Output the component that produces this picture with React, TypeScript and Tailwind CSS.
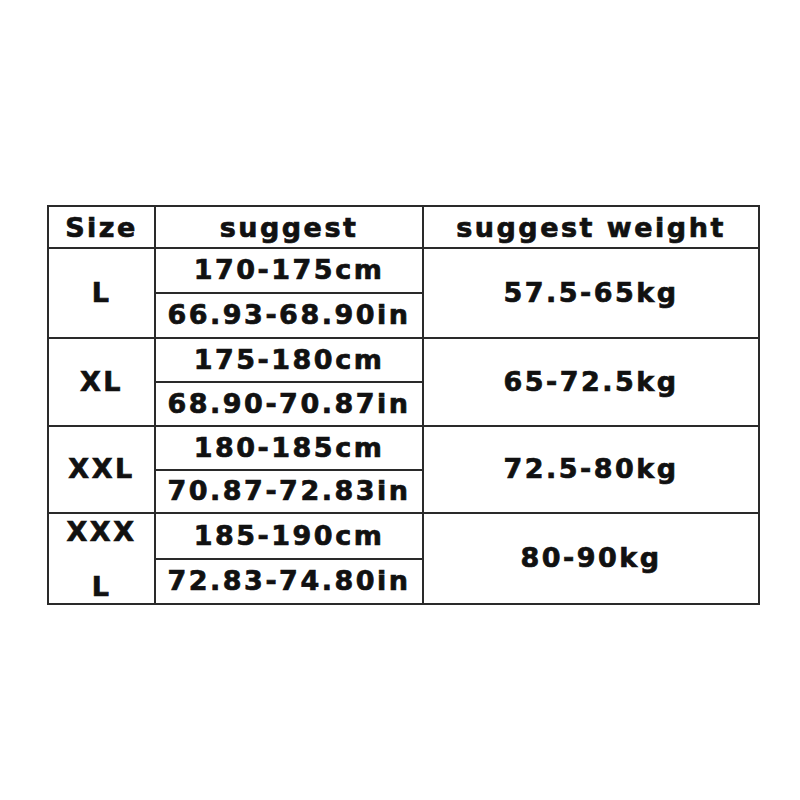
import React from "react";

const rows = [
  { size: "L", cm: "170-175cm", inch: "66.93-68.90in", kg: "57.5-65kg", h: "h-[90px]" },
  { size: "XL", cm: "175-180cm", inch: "68.90-70.87in", kg: "65-72.5kg", h: "h-[88px]" },
  { size: "XXL", cm: "180-185cm", inch: "70.87-72.83in", kg: "72.5-80kg", h: "h-[87px]" },
  { size: "XXXL", cm: "185-190cm", inch: "72.83-74.80in", kg: "80-90kg", h: "h-[89px]" },
];

export default function App() {
  return (
    <div className="w-[800px] h-[800px] bg-white flex flex-col pt-[205px] pl-[47px] text-[#111] font-['DejaVu_Sans',sans-serif] font-bold text-[27px] tracking-[2.5px] [-webkit-text-stroke:0.7px_#111]">
      <div className="w-[713px] border-2 border-[#2a2a2a] flex flex-col">
        <div className="flex h-[42px] border-b-2 border-[#2a2a2a]">
          <div className="w-[107px] border-r-2 border-[#2a2a2a] flex items-center justify-center pt-[3px]">Size</div>
          <div className="w-[268px] border-r-2 border-[#2a2a2a] flex items-center justify-center pt-[3px]">suggest</div>
          <div className="flex-1 flex items-center justify-center pt-[3px]">suggest weight</div>
        </div>
        {rows.map((r, i) => (
          <div
            key={r.size}
            className={`flex ${r.h} ${i < rows.length - 1 ? "border-b-2 border-[#2a2a2a]" : ""}`}
          >
            <div className="w-[107px] border-r-2 border-[#2a2a2a] flex items-center justify-center text-center">
              {r.size === "XXXL" ? (
                <span className="leading-[55px]">
                  XXX
                  <br />L
                </span>
              ) : (
                r.size
              )}
            </div>
            <div className="w-[268px] border-r-2 border-[#2a2a2a] flex flex-col">
              <div className="flex-1 border-b-2 border-[#2a2a2a] flex items-center justify-center">{r.cm}</div>
              <div className="flex-1 flex items-center justify-center">{r.inch}</div>
            </div>
            <div className="flex-1 flex items-center justify-center">{r.kg}</div>
          </div>
        ))}
      </div>
    </div>
  );
}
